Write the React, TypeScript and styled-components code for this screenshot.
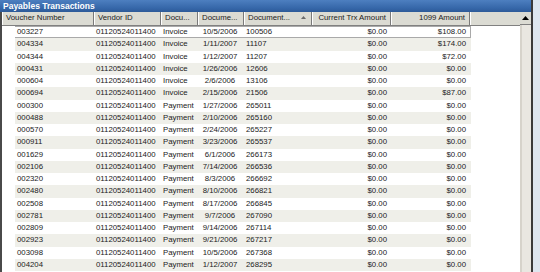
import React from 'react';
import styled, { createGlobalStyle } from 'styled-components';

const GlobalStyle = createGlobalStyle`
  html, body {
    margin: 0;
    padding: 0;
    background: #dde6ef;
    font-family: "Liberation Sans", Arial, sans-serif;
  }
`;

type Row = [string, string, string, string, string, string];

const rows: Row[] = [
  ['003227', 'Invoice', '10/5/2006', '100506', '$0.00', '$108.00'],
  ['004334', 'Invoice', '1/11/2007', '11107', '$0.00', '$174.00'],
  ['004344', 'Invoice', '1/12/2007', '11207', '$0.00', '$72.00'],
  ['000431', 'Invoice', '1/26/2006', '12606', '$0.00', '$0.00'],
  ['000604', 'Invoice', '2/6/2006', '13106', '$0.00', '$0.00'],
  ['000694', 'Invoice', '2/15/2006', '21506', '$0.00', '$87.00'],
  ['000300', 'Payment', '1/27/2006', '265011', '$0.00', '$0.00'],
  ['000488', 'Payment', '2/10/2006', '265160', '$0.00', '$0.00'],
  ['000570', 'Payment', '2/24/2006', '265227', '$0.00', '$0.00'],
  ['000911', 'Payment', '3/23/2006', '265537', '$0.00', '$0.00'],
  ['001629', 'Payment', '6/1/2006', '266173', '$0.00', '$0.00'],
  ['002106', 'Payment', '7/14/2006', '266536', '$0.00', '$0.00'],
  ['002320', 'Payment', '8/3/2006', '266692', '$0.00', '$0.00'],
  ['002480', 'Payment', '8/10/2006', '266821', '$0.00', '$0.00'],
  ['002508', 'Payment', '8/17/2006', '266845', '$0.00', '$0.00'],
  ['002781', 'Payment', '9/7/2006', '267090', '$0.00', '$0.00'],
  ['002809', 'Payment', '9/14/2006', '267114', '$0.00', '$0.00'],
  ['002923', 'Payment', '9/21/2006', '267217', '$0.00', '$0.00'],
  ['003098', 'Payment', '10/5/2006', '267368', '$0.00', '$0.00'],
  ['004204', 'Payment', '1/12/2007', '268295', '$0.00', '$0.00'],
];

const VENDOR = '01120524011400';
const DATA_COLS = '79px 67px 37px 46px 68px 79px 79px';

const App: React.FC = () => {
  return (
    <>
      <GlobalStyle />
      <Window>
        <TitleBar>Payables Transactions</TitleBar>
        <Content>
          <Grid>
            <Header>
              <HeadCell $w={92}>Voucher Number</HeadCell>
              <HeadCell $w={67}>Vendor ID</HeadCell>
              <HeadCell $w={37}>Docu...</HeadCell>
              <HeadCell $w={46}>Docume...</HeadCell>
              <HeadCell $w={68}>
                Document...
                <SortArrow>
                  <svg width="5" height="3" viewBox="0 0 5 3">
                    <path d="M2.5 0 L5 3 L0 3 Z" fill="#6b6b6b" />
                  </svg>
                </SortArrow>
              </HeadCell>
              <HeadCell $w={79} $align="right">Current Trx Amount</HeadCell>
              <HeadCell $w={79} $align="right">1099 Amount</HeadCell>
              <HeadFiller />
            </Header>
            <Body>
              {rows.map((r, i) => (
                <RowLine key={r[0]}>
                  <Gutter />
                  <DataRow $shaded={i % 2 === 1} $focused={i === 0}>
                    <Cell>{r[0]}</Cell>
                    <Cell>{VENDOR}</Cell>
                    <Cell>{r[1]}</Cell>
                    <Cell $align="center">{r[2]}</Cell>
                    <Cell>{r[3]}</Cell>
                    <Cell $align="right">{r[4]}</Cell>
                    <Cell $align="right">{r[5]}</Cell>
                  </DataRow>
                </RowLine>
              ))}
            </Body>
          </Grid>
          <ScrollBar>
            <ScrollButton>
              <svg width="7" height="4" viewBox="0 0 7 4">
                <path d="M3.5 0 L7 4 L0 4 Z" fill="#000" />
              </svg>
            </ScrollButton>
            <ScrollTrack />
          </ScrollBar>
        </Content>
      </Window>
    </>
  );
};

const Window = styled.div`
  width: 533px;
  height: 272px;
  display: flex;
  flex-direction: column;
  background: #fff;
  box-sizing: border-box;
  border-right: 2px solid #3a3a3a;
  overflow: hidden;
`;

const TitleBar = styled.div`
  height: 12px;
  flex: none;
  background: linear-gradient(#4d7fc0, #3566a8 70%, #2d5a98);
  color: #fff;
  font-weight: bold;
  font-size: 8.5px;
  line-height: 12px;
  padding-left: 3px;
`;

const Content = styled.div`
  flex: 1;
  display: flex;
  border-left: 2px solid #4a4a4a;
  min-height: 0;
`;

const Grid = styled.div`
  flex: 1;
  display: flex;
  flex-direction: column;
  min-width: 0;
`;

const Header = styled.div`
  display: flex;
  height: 13px;
  flex: none;
  background: #dbdbd3;
  border-bottom: 1px solid #808080;
`;

const HeadCell = styled.div<{ $w: number; $align?: 'left' | 'right' }>`
  box-sizing: border-box;
  width: ${(p) => p.$w}px;
  flex: none;
  position: relative;
  font-size: 7.8px;
  line-height: 12px;
  color: #222;
  padding: 0 4px 0 3px;
  text-align: ${(p) => p.$align ?? 'left'};
  white-space: nowrap;
  overflow: hidden;
  border-left: 1px solid #fff;
  border-right: 1px solid #7a7a7a;
`;

const SortArrow = styled.span`
  position: absolute;
  right: 5px;
  top: 4px;
  line-height: 0;
`;

const HeadFiller = styled.div`
  flex: 1;
  border-left: 1px solid #fff;
`;

const Body = styled.div`
  flex: 1;
  display: flex;
  flex-direction: column;
`;

const RowLine = styled.div`
  display: flex;
  height: 12.25px;
  flex: none;
`;

const Gutter = styled.div`
  width: 13px;
  flex: none;
`;

const DataRow = styled.div<{ $shaded: boolean; $focused: boolean }>`
  display: grid;
  grid-template-columns: ${DATA_COLS};
  box-sizing: border-box;
  background: ${(p) => (p.$shaded ? '#efefe9' : '#fff')};
  border: 1px solid ${(p) => (p.$focused ? '#a9a9a9' : 'transparent')};
  border-left: none;
`;

const Cell = styled.div<{ $align?: 'left' | 'right' | 'center' }>`
  font-size: 7.8px;
  line-height: 10.25px;
  color: #222;
  padding: 0 4px 0 2px;
  text-align: ${(p) => p.$align ?? 'left'};
  white-space: nowrap;
  overflow: hidden;
`;

const ScrollBar = styled.div`
  width: 11px;
  flex: none;
  display: flex;
  flex-direction: column;
  background: #e6e4de;
`;

const ScrollButton = styled.div`
  height: 13px;
  box-sizing: border-box;
  display: flex;
  align-items: center;
  justify-content: center;
  background: #dbdbd3;
  border-bottom: 1px solid #808080;
`;

const ScrollTrack = styled.div`
  flex: 1;
  border-left: 2px solid #d6d3cb;
  background: #e9e7e1;
`;

export default App;
